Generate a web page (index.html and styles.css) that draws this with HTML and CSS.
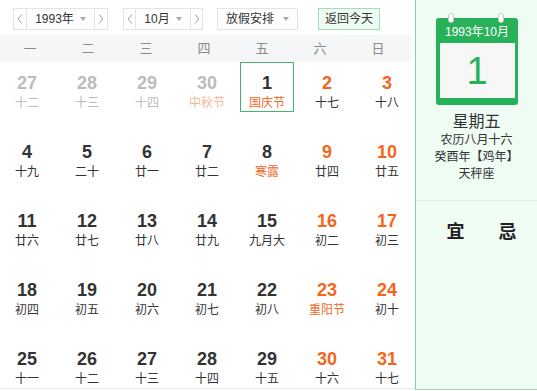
FILE: index.html
```html
<!DOCTYPE html>
<html lang="zh">
<head>
<meta charset="utf-8">
<title>万年历</title>
<link rel="stylesheet" href="styles.css">
</head>
<body>
<div class="page">
  <div class="cal">
    <div class="toolbar">
      <div class="sel sel-year">
        <span class="arr arr-l"><svg width="6" height="10" viewBox="0 0 6 10"><polyline points="5,0.5 1,5 5,9.5" fill="none" stroke="#9a9a9a" stroke-width="1"/></svg></span>
        <span class="val">1993年<i class="tri"></i></span>
        <span class="arr arr-r"><svg width="6" height="10" viewBox="0 0 6 10"><polyline points="1,0.5 5,5 1,9.5" fill="none" stroke="#9a9a9a" stroke-width="1"/></svg></span>
      </div>
      <div class="sel sel-month">
        <span class="arr arr-l"><svg width="6" height="10" viewBox="0 0 6 10"><polyline points="5,0.5 1,5 5,9.5" fill="none" stroke="#9a9a9a" stroke-width="1"/></svg></span>
        <span class="val">10月<i class="tri"></i></span>
        <span class="arr arr-r"><svg width="6" height="10" viewBox="0 0 6 10"><polyline points="1,0.5 5,5 1,9.5" fill="none" stroke="#9a9a9a" stroke-width="1"/></svg></span>
      </div>
      <div class="sel sel-holiday"><span class="val">放假安排<i class="tri"></i></span></div>
      <div class="today-btn">返回今天</div>
    </div>
    <div class="weekhead">
      <span>一</span><span>二</span><span>三</span><span>四</span><span>五</span><span>六</span><span>日</span>
    </div>
    <div class="grid">
      <div class="cell other"><b>27</b><em>十二</em></div>
      <div class="cell other"><b>28</b><em>十三</em></div>
      <div class="cell other"><b>29</b><em>十四</em></div>
      <div class="cell other"><b>30</b><em class="fest">中秋节</em></div>
      <div class="cell selected"><b>1</b><em class="fest">国庆节</em></div>
      <div class="cell wk"><b>2</b><em>十七</em></div>
      <div class="cell wk"><b>3</b><em>十八</em></div>

      <div class="cell"><b>4</b><em>十九</em></div>
      <div class="cell"><b>5</b><em>二十</em></div>
      <div class="cell"><b>6</b><em>廿一</em></div>
      <div class="cell"><b>7</b><em>廿二</em></div>
      <div class="cell"><b>8</b><em class="fest">寒露</em></div>
      <div class="cell wk"><b>9</b><em>廿四</em></div>
      <div class="cell wk"><b>10</b><em>廿五</em></div>

      <div class="cell"><b>11</b><em>廿六</em></div>
      <div class="cell"><b>12</b><em>廿七</em></div>
      <div class="cell"><b>13</b><em>廿八</em></div>
      <div class="cell"><b>14</b><em>廿九</em></div>
      <div class="cell"><b>15</b><em>九月大</em></div>
      <div class="cell wk"><b>16</b><em>初二</em></div>
      <div class="cell wk"><b>17</b><em>初三</em></div>

      <div class="cell"><b>18</b><em>初四</em></div>
      <div class="cell"><b>19</b><em>初五</em></div>
      <div class="cell"><b>20</b><em>初六</em></div>
      <div class="cell"><b>21</b><em>初七</em></div>
      <div class="cell"><b>22</b><em>初八</em></div>
      <div class="cell wk"><b>23</b><em class="fest">重阳节</em></div>
      <div class="cell wk"><b>24</b><em>初十</em></div>

      <div class="cell"><b>25</b><em>十一</em></div>
      <div class="cell"><b>26</b><em>十二</em></div>
      <div class="cell"><b>27</b><em>十三</em></div>
      <div class="cell"><b>28</b><em>十四</em></div>
      <div class="cell"><b>29</b><em>十五</em></div>
      <div class="cell wk"><b>30</b><em>十六</em></div>
      <div class="cell wk"><b>31</b><em>十七</em></div>
    </div>
  </div>
  <div class="side">
    <div class="icon">
      <span class="ring ring-l"></span><span class="ring ring-r"></span>
      <div class="icon-head">1993年10月</div>
      <div class="icon-body">1</div>
    </div>
    <div class="weekday">星期五</div>
    <div class="info">
      <div>农历八月十六</div>
      <div>癸酉年【鸡年】</div>
      <div>天秤座</div>
    </div>
    <div class="yiji"><span>宜</span><span>忌</span></div>
  </div>
</div>
</body>
</html>
```
FILE: styles.css
```css
* { box-sizing: border-box; }
html, body { margin: 0; padding: 0; background: #fff; }
body {
  font-family: "Liberation Sans", Arial, "Noto Sans CJK SC", sans-serif;
  color: #333;
}
.page {
  display: flex;
  width: 537px;
  height: 391px;
  align-items: flex-start;
}
.cal {
  width: 415px;
  flex: none;
}
.toolbar {
  display: flex;
  align-items: flex-start;
  height: 35px;
  padding: 8px 0 0 13px;
}
.sel {
  display: flex;
  height: 22px;
  border: 1px solid #e4e4e4;
  background: #fff;
  font-size: 12px;
  line-height: 20px;
  color: #333;
}
.sel-year { width: 95px; }
.sel-month { width: 80px; margin-left: 15px; }
.sel-holiday { width: 81px; margin-left: 14px; }
.arr {
  display: flex;
  align-items: center;
  justify-content: center;
  width: 13px;
  flex: none;
}
.arr-l { border-right: 1px solid #e4e4e4; }
.arr-r { border-left: 1px solid #e4e4e4; }
.sel-month .arr { width: 12px; }
.val {
  flex: 1;
  display: flex;
  align-items: center;
  justify-content: center;
}
.tri {
  display: inline-block;
  width: 0;
  height: 0;
  margin-left: 6px;
  border-left: 3px solid transparent;
  border-right: 3px solid transparent;
  border-top: 4px solid #a8a8a8;
}
.sel-holiday .tri { margin-left: 9px; }
.today-btn {
  margin-left: 20px;
  width: 62px;
  height: 22px;
  border: 1px solid #a6dcbb;
  background: #eefbf3;
  font-size: 12px;
  line-height: 20px;
  text-align: center;
  color: #333;
}
.weekhead {
  display: grid;
  grid-template-columns: repeat(7, 58px);
  width: 411px;
  height: 27px;
  padding-left: 1px;
  background: #f4f6f7;
  font-size: 13px;
  line-height: 27px;
  color: #8a8a8a;
  text-align: center;
}
.grid {
  display: grid;
  grid-template-columns: repeat(7, 54px);
  grid-template-rows: repeat(5, 50px);
  column-gap: 6px;
  row-gap: 19px;
  border-bottom: 1px solid #e6e6e6;
}
.cell {
  display: flex;
  flex-direction: column;
  align-items: center;
  padding-top: 10px;
  border: 1px solid transparent;
}
.cell b {
  font-size: 18px;
  font-weight: bold;
  line-height: 22px;
  color: #333;
  margin-top: -1px;
}
.cell em {
  font-style: normal;
  font-size: 12px;
  line-height: 16px;
  margin-top: 1px;
  color: #333;
  white-space: nowrap;
}
.cell.wk b { color: #f4661b; }
.cell em.fest { color: #ef6b2a; }
.cell.other b, .cell.other em { color: #bcbcbc; }
.cell.other em.fest { color: #f6b899; }
.cell.selected { border-color: #45b36d; }
.side {
  flex: 1;
  height: 390px;
  background: #effcf4;
  border-left: 1px solid #86cfa2;
  border-bottom: 1px solid #a9cdb7;
  display: flex;
  flex-direction: column;
  align-items: center;
}
.icon {
  position: relative;
  width: 82px;
  margin-top: 18px;
  padding: 0 3px 7px 4px;
  background: #27b25a;
  border-radius: 3px;
}
.ring {
  position: absolute;
  top: -5px;
  width: 6px;
  height: 10px;
  background: #fff;
  border: 1px solid #c9c9c9;
  border-radius: 3px;
}
.ring-l { left: 12px; }
.ring-r { left: 62px; }
.icon-head {
  height: 25px;
  line-height: 28px;
  font-size: 12px;
  color: #fff;
  text-align: center;
}
.icon-body {
  height: 55px;
  background: #f7f7f7;
  font-size: 38px;
  line-height: 56px;
  color: #27b25a;
  text-align: center;
}
.weekday {
  margin-top: 7px;
  font-size: 16px;
  line-height: 20px;
  color: #333;
}
.info {
  font-size: 12px;
  line-height: 17px;
  color: #333;
  text-align: center;
}
.yiji {
  align-self: stretch;
  margin-top: 17px;
  border-top: 1px solid #dbeee2;
  padding: 19px 0 0 10px;
  display: flex;
  justify-content: center;
  gap: 34px;
  font-size: 18px;
  font-weight: bold;
  line-height: 24px;
  color: #222;
}
```
